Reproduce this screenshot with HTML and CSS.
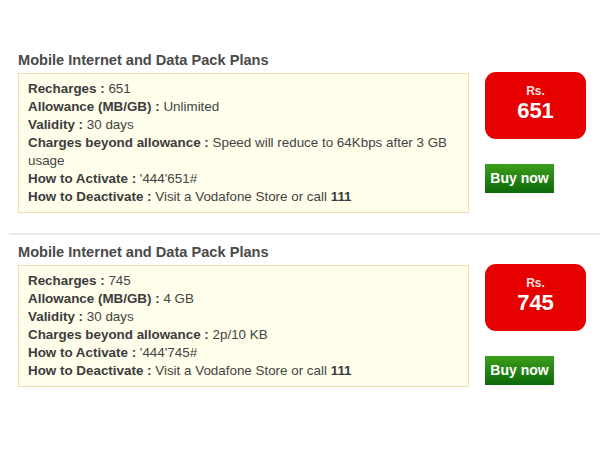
FILE: index.html
```html
<!DOCTYPE html>
<html>
<head>
<meta charset="utf-8">
<link rel="stylesheet" href="styles.css">
</head>
<body>
<div class="page">
  <section class="plan plan-first">
    <h2 class="plan-title">Mobile Internet and Data Pack Plans</h2>
    <div class="plan-row">
      <div class="details">
        <p><b>Recharges :</b> 651</p>
        <p><b>Allowance (MB/GB) :</b> Unlimited</p>
        <p><b>Validity :</b> 30 days</p>
        <p><b>Charges beyond allowance :</b> Speed will reduce to 64Kbps after 3 GB usage</p>
        <p><b>How to Activate :</b> '444'651#</p>
        <p><b>How to Deactivate :</b> Visit a Vodafone Store or call <b>111</b></p>
      </div>
      <div class="side">
        <div class="price"><span class="rs">Rs.</span><span class="amount">651</span></div>
        <a class="buy">Buy now</a>
      </div>
    </div>
  </section>
  <hr class="sep">
  <section class="plan">
    <h2 class="plan-title">Mobile Internet and Data Pack Plans</h2>
    <div class="plan-row">
      <div class="details">
        <p><b>Recharges :</b> 745</p>
        <p><b>Allowance (MB/GB) :</b> 4 GB</p>
        <p><b>Validity :</b> 30 days</p>
        <p><b>Charges beyond allowance :</b> 2p/10 KB</p>
        <p><b>How to Activate :</b> '444'745#</p>
        <p><b>How to Deactivate :</b> Visit a Vodafone Store or call <b>111</b></p>
      </div>
      <div class="side">
        <div class="price"><span class="rs">Rs.</span><span class="amount">745</span></div>
        <a class="buy">Buy now</a>
      </div>
    </div>
  </section>
</div>
</body>
</html>
```
FILE: styles.css
```css
html, body {
  margin: 0;
  padding: 0;
  background: #ffffff;
}
body {
  font-family: "Liberation Sans", Arial, sans-serif;
  color: #444444;
}
.page {
  padding-top: 51px;
}
.plan {
  padding-left: 18px;
}
.plan-title {
  margin: 0 0 4px 0;
  font-size: 14.6px;
  line-height: 18px;
  font-weight: bold;
  color: #4a4a4a;
}
.plan-row {
  display: flex;
  align-items: flex-start;
}
.details {
  width: 430px;
  padding: 6px 10px 6px 9px;
  background: #fffeeb;
  border: 1px solid #f3dcae;
  font-size: 13.4px;
  line-height: 18px;
  color: #444444;
}
.details p {
  margin: 0;
}
.details b {
  color: #3c3c3c;
}
.side {
  margin-left: 16px;
  margin-top: -1px;
  display: flex;
  flex-direction: column;
  align-items: flex-start;
}
.price {
  width: 101px;
  height: 67px;
  box-sizing: border-box;
  background: #e60000;
  border-radius: 11px;
  color: #ffffff;
  font-weight: bold;
  display: flex;
  flex-direction: column;
  align-items: center;
  padding-top: 12px;
}
.rs {
  font-size: 12px;
  line-height: 14px;
  color: #fbe0e0;
}
.amount {
  font-size: 22px;
  line-height: 26px;
}
.buy {
  margin-top: 25px;
  width: 69px;
  height: 29px;
  box-sizing: border-box;
  background: linear-gradient(#3d9e1c, #0b6a0b);
  color: #ffffff;
  font-weight: bold;
  font-size: 14px;
  line-height: 29px;
  text-align: center;
  display: block;
}
.sep {
  margin: 20px 0 8px 9px;
  border: 0;
  height: 2px;
  background: #ebebeb;
}
```
